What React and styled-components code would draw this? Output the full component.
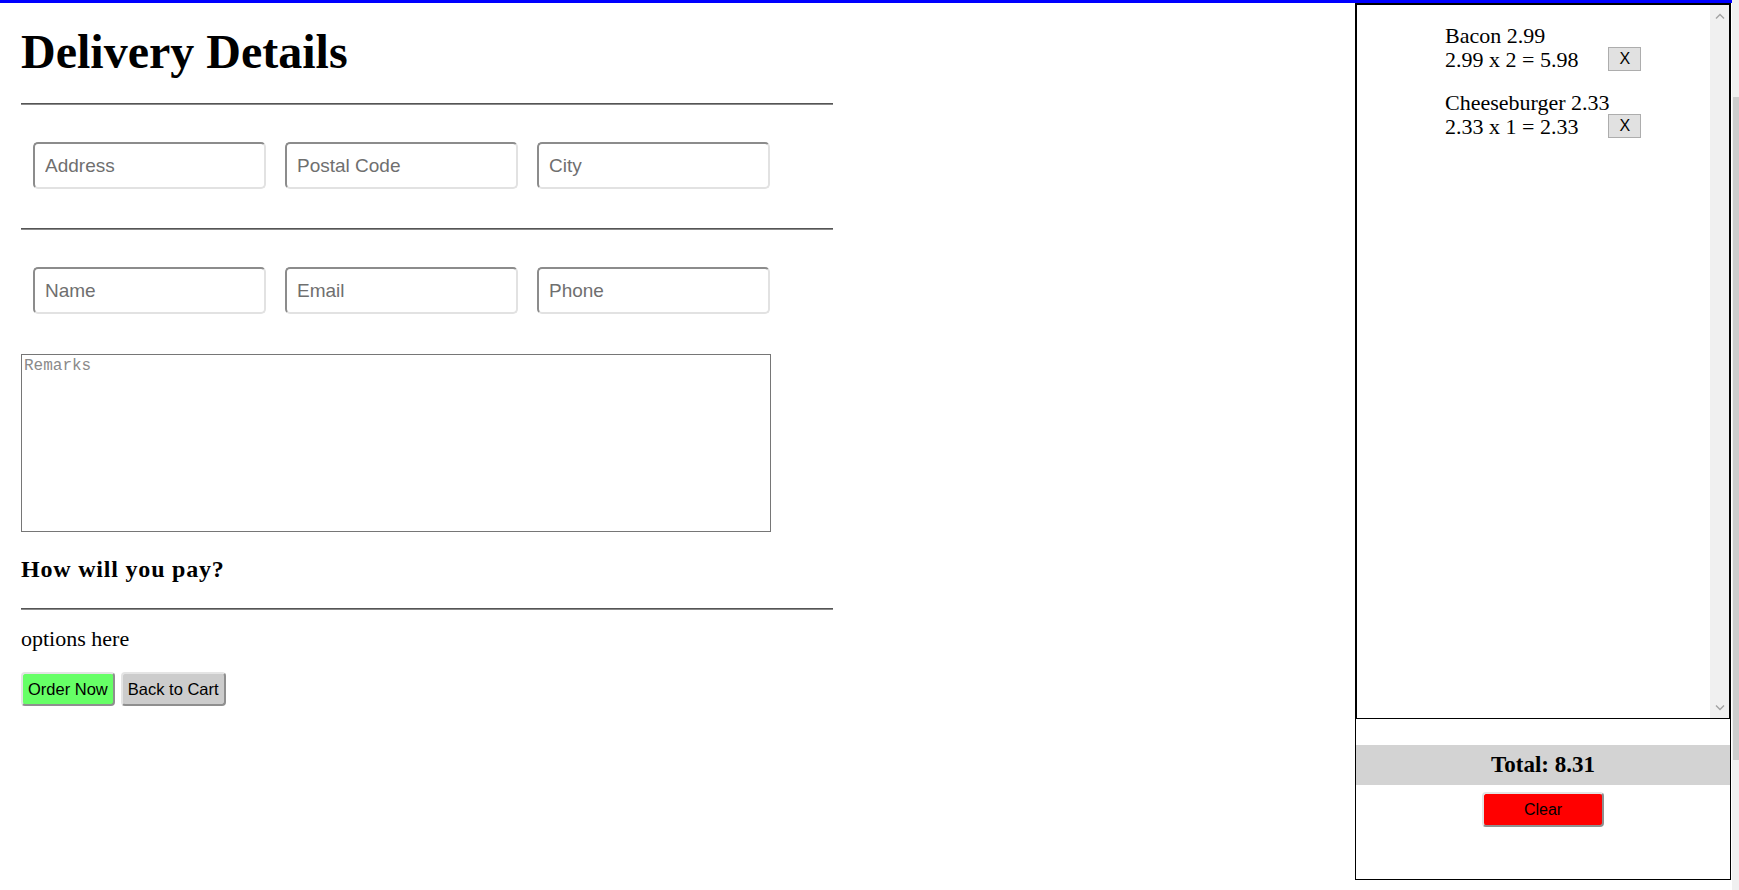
import styled, { createGlobalStyle } from 'styled-components';

const GlobalStyle = createGlobalStyle`
  html, body {
    margin: 0;
    padding: 0;
    overflow: hidden;
    background: #fff;
  }
  body {
    font-family: "Liberation Serif", "Times New Roman", serif;
    color: #000;
  }
  * {
    box-sizing: border-box;
  }
`;

const Page = styled.div`
  display: flex;
  height: 890px;
`;

const Content = styled.div`
  flex: 1;
  display: flex;
  align-items: flex-start;
  border-top: 3px solid #0000ff;
`;

const Main = styled.main`
  width: 833px;
  padding-left: 21px;
`;

const Heading = styled.h1`
  margin: 22px 0 0;
  font-size: 48px;
  line-height: 53px;
  font-weight: bold;
`;

const Divider = styled.hr`
  margin: ${(p) => p.$top || 25}px 0 0;
  height: 0;
  border: none;
  border-top: 1px solid #555;
  border-bottom: 1px solid #8a8a8a;
`;

const InputRow = styled.div`
  display: flex;
  gap: 19px;
  margin-top: 37px;
  padding-left: 12px;
`;

const Field = styled.input`
  width: 233px;
  height: 47px;
  padding: 0 10px;
  border: 2px solid;
  border-color: #8c8c8c #e2e2e2 #e2e2e2 #8c8c8c;
  border-radius: 5px;
  font-family: Tahoma, "Liberation Sans", Arial, sans-serif;
  font-size: 19px;
  color: #222;
  outline: none;

  &::placeholder {
    color: #6f6f6f;
  }
`;

const Remarks = styled.textarea`
  display: block;
  margin-top: 40px;
  width: 750px;
  height: 178px;
  padding: 2px;
  border: 1px solid #767676;
  font-family: "Liberation Mono", "Courier New", monospace;
  font-size: 16px;
  resize: none;
  outline: none;

  &::placeholder {
    color: #8a8a8a;
  }
`;

const SubHeading = styled.h3`
  margin: 23px 0 0;
  font-size: 24px;
  line-height: 28px;
  letter-spacing: 0.8px;
  font-weight: bold;
`;

const Note = styled.p`
  margin: 16px 0 0;
  font-size: 22px;
  line-height: 25px;
`;

const Actions = styled.div`
  display: flex;
  gap: 6px;
  margin-top: 21px;
`;

const Button = styled.button`
  height: 34px;
  padding: 0 5px;
  background: ${(p) => p.$bg || '#cccccc'};
  border: 2px solid;
  border-color: #e4e4e4 #8f8f8f #8f8f8f #e4e4e4;
  border-radius: 4px;
  font-family: Tahoma, "Liberation Sans", Arial, sans-serif;
  font-size: 16.5px;
  color: #000;
  cursor: pointer;
`;

const Cart = styled.aside`
  margin-left: auto;
  margin-right: 1px;
  width: 376px;
  height: 877px;
  border: 1px solid #000;
  display: flex;
  flex-direction: column;
  align-items: center;
`;

const ItemBox = styled.div`
  align-self: stretch;
  display: flex;
  height: 715px;
  border: 1px solid #000;
`;

const ItemList = styled.div`
  flex: 1;
  padding: 19px 0 0 88px;
  font-size: 22px;
`;

const Item = styled.div`
  margin-bottom: 20px;
`;

const ItemName = styled.div`
  line-height: 23px;
`;

const ItemLine = styled.div`
  display: flex;
  align-items: center;
  height: 24px;
  line-height: 23px;
`;

const RemoveButton = styled.button`
  margin-left: 30px;
  width: 33px;
  height: 24px;
  padding: 0;
  background: #e1e1e1;
  border: 1px solid #adadad;
  font-family: Tahoma, "Liberation Sans", Arial, sans-serif;
  font-size: 16px;
  color: #000;
`;

const ScrollTrack = styled.div`
  width: 19px;
  background: #f0f0f0;
  display: flex;
  flex-direction: column;
  justify-content: space-between;
  align-items: center;
  padding: 8px 0 7px;
`;

const TotalBar = styled.div`
  align-self: stretch;
  margin-top: 26px;
  height: 40px;
  line-height: 40px;
  background: #d3d3d3;
  text-align: center;
  font-size: 23px;
  font-weight: bold;
`;

const ClearButton = styled(Button)`
  margin-top: 7px;
  width: 122px;
  height: 35px;
  background: #ff0000;
  font-size: 16px;
`;

const PageScroll = styled.div`
  width: 7px;
  background: #f0f0f0;
  padding: 97px 0 0 1px;
`;

const PageThumb = styled.div`
  height: 663px;
  background: #cdcdcd;
`;

const Chevron = ({ down }) => (
  <svg width="10" height="7" viewBox="0 0 10 7">
    <polyline
      points={down ? '1,1.5 5,5.5 9,1.5' : '1,5.5 5,1.5 9,5.5'}
      fill="none"
      stroke="#a3a3a3"
      strokeWidth="1.4"
    />
  </svg>
);

const items = [
  { name: 'Bacon', price: 2.99, qty: 2 },
  { name: 'Cheeseburger', price: 2.33, qty: 1 },
];

const App = () => {
  const total = items.reduce((sum, item) => sum + item.price * item.qty, 0);

  return (
    <>
      <GlobalStyle />
      <Page>
        <Content>
          <Main>
            <Heading>Delivery Details</Heading>
            <Divider $top={25} />
            <InputRow>
              <Field placeholder="Address" />
              <Field placeholder="Postal Code" />
              <Field placeholder="City" />
            </InputRow>
            <Divider $top={39} />
            <InputRow>
              <Field placeholder="Name" />
              <Field placeholder="Email" />
              <Field placeholder="Phone" />
            </InputRow>
            <Remarks placeholder="Remarks" />
            <SubHeading>How will you pay?</SubHeading>
            <Divider $top={25} />
            <Note>options here</Note>
            <Actions>
              <Button $bg="#66ff66">Order Now</Button>
              <Button>Back to Cart</Button>
            </Actions>
          </Main>

          <Cart>
            <ItemBox>
              <ItemList>
                {items.map((item) => (
                  <Item key={item.name}>
                    <ItemName>
                      {item.name} {item.price}
                    </ItemName>
                    <ItemLine>
                      {item.price} x {item.qty} = {(item.price * item.qty).toFixed(2)}
                      <RemoveButton>X</RemoveButton>
                    </ItemLine>
                  </Item>
                ))}
              </ItemList>
              <ScrollTrack>
                <Chevron />
                <Chevron down />
              </ScrollTrack>
            </ItemBox>
            <TotalBar>Total: {total.toFixed(2)}</TotalBar>
            <ClearButton>Clear</ClearButton>
          </Cart>
        </Content>
        <PageScroll>
          <PageThumb />
        </PageScroll>
      </Page>
    </>
  );
};

export default App;
